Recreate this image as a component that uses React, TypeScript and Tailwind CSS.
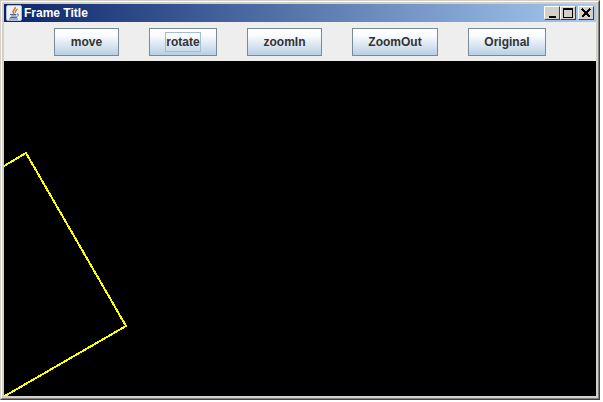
function JavaIcon() {
  return (
    <div className="flex h-4 w-4 items-center justify-center rounded-[2px] border border-[#a9bdd6] bg-[#eef2f8]">
      <svg width="14" height="14" viewBox="0 0 14 14" fill="none">
        <path d="M8 1C9 3 6 4 6 6C6 7 7 7 7 8" stroke="#f07010" strokeWidth="1.6" />
        <path d="M10.500 3C9 4 8 5 8.500 7" stroke="#f07010" strokeWidth="1.2" />
        <path d="M3 8.500H9.500M4 10H9M3 11.500H10" stroke="#4a6a9c" strokeWidth="1" />
        <path d="M10 8C12 7.500 12 10 9.500 10.500" stroke="#4a6a9c" strokeWidth="1" />
        <path d="M2 13H11" stroke="#4a6a9c" strokeWidth="1" />
      </svg>
    </div>
  );
}

function WinButton({ children }: { children: React.ReactNode }) {
  return (
    <div className="flex h-[14px] w-4 items-center justify-center border border-t-white border-l-white border-r-[#404040] border-b-[#404040] bg-[#d4d0c8]">
      {children}
    </div>
  );
}

function ToolButton({ label, width, focused }: { label: string; width: string; focused?: boolean }) {
  return (
    <button
      className={`flex h-[28px] items-center justify-center border border-[#7a8a99] bg-[linear-gradient(#ffffff,#fbfcfe_25%,#b8cfe5)] text-[12px] font-bold text-[#333333] ${width}`}
    >
      <span className={focused ? "w-[36px] border border-[#a3bdd6] text-center leading-[18px]" : "leading-[20px]"}>
        {label}
      </span>
    </button>
  );
}

export default function App() {
  return (
    <div className="h-[402px] w-[603px] bg-white font-['Liberation_Sans',Arial,sans-serif]">
      <div className="h-[400px] w-[600px] border border-t-[#d4d0c8] border-l-[#d4d0c8] border-r-[#404040] border-b-[#404040]">
        <div className="flex h-full flex-col border border-t-white border-l-white border-r-[#808080] border-b-[#808080] bg-[#d4d0c8] p-[2px]">
          <div className="flex h-[18px] items-center bg-[linear-gradient(90deg,#0a246a,#a6caf0)] pr-[2px] pl-[2px]">
            <JavaIcon />
            <span className="ml-[2px] text-[12px] leading-none font-bold text-white">Frame Title</span>
            <div className="ml-auto flex">
              <WinButton>
                <span className="mt-[7px] h-[2px] w-[7px] bg-black" />
              </WinButton>
              <WinButton>
                <span className="h-[10px] w-[10px] border border-t-2 border-black" />
              </WinButton>
              <div className="ml-[2px]">
                <WinButton>
                  <svg width="10" height="10" viewBox="0 0 10 10" shapeRendering="crispEdges">
                    <path d="M1 1L9 9M9 1L1 9" stroke="#000000" strokeWidth="1.5" />
                  </svg>
                </WinButton>
              </div>
            </div>
          </div>
          <div className="flex h-[39px] items-center gap-[30px] bg-[#eeeeee] pl-[50px]">
            <ToolButton label="move" width="w-[65px]" />
            <ToolButton label="rotate" width="w-[68px]" focused />
            <ToolButton label="zoomIn" width="w-[75px]" />
            <ToolButton label="ZoomOut" width="w-[86px]" />
            <ToolButton label="Original" width="w-[78px]" />
          </div>
          <div className="flex-1 bg-black">
            <svg width="592" height="335" viewBox="0 0 592 335" shapeRendering="crispEdges">
              <path d="M0 105L22 92L122 265L0 335.500" stroke="#ffff00" strokeWidth="2" fill="none" />
            </svg>
          </div>
        </div>
      </div>
    </div>
  );
}
